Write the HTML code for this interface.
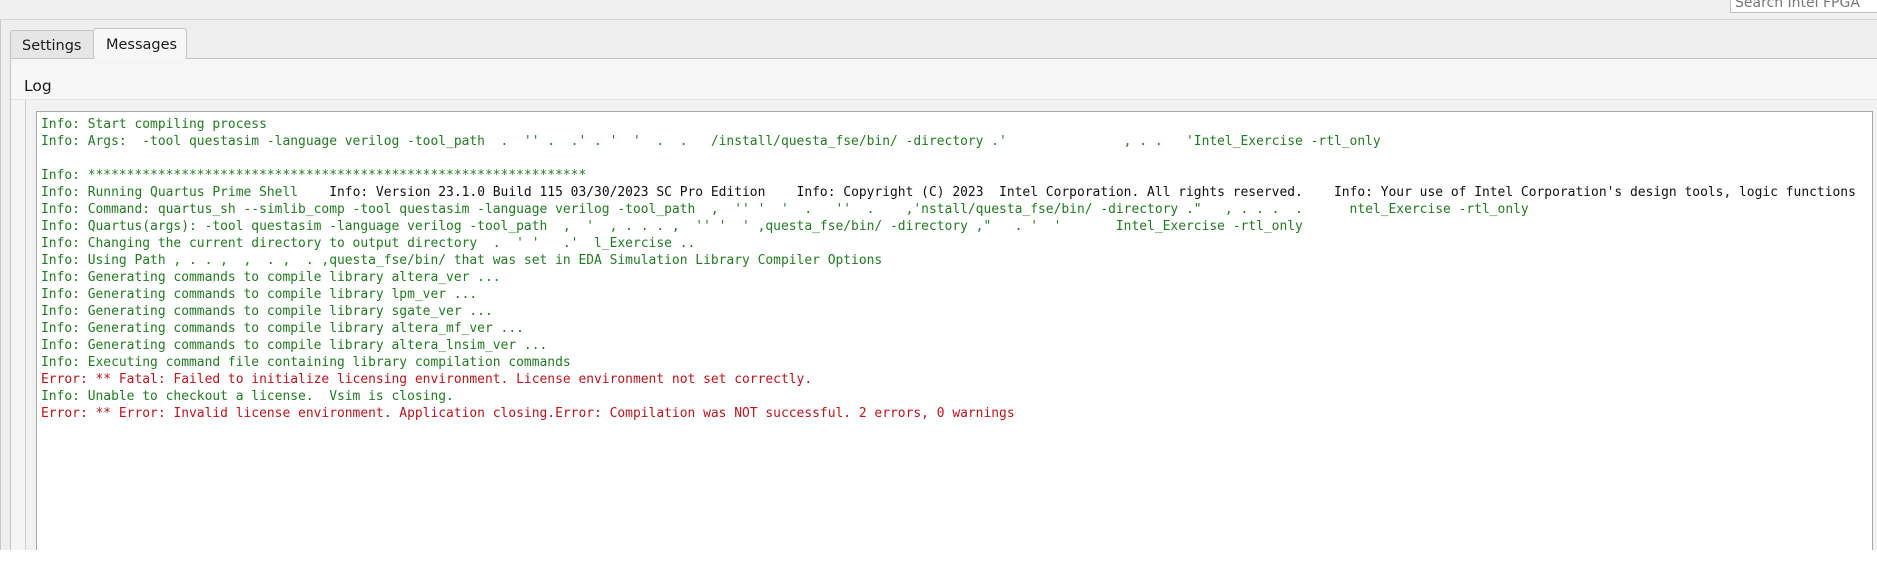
<!DOCTYPE html>
<html><head><meta charset="utf-8"><style>
*{margin:0;padding:0;box-sizing:border-box}
body{width:1877px;height:573px;background:#fff;position:relative;overflow:hidden;font-family:"DejaVu Sans","Liberation Sans",sans-serif}
.top{position:absolute;left:0;top:0;width:1877px;height:20px;background:#f0f0f0;border-bottom:1px solid #d4d4d4}
.search{position:absolute;left:1730px;top:-6px;width:160px;height:19px;background:#fff;border:1px solid #bdbdbd;font-size:14px;color:#777;padding-left:4px;line-height:16px;overflow:hidden}
.tabbar{position:absolute;left:0;top:20px;width:1877px;height:530px;background:#eeeeee;border-left:1px solid #c8c8c8}
.tab{position:absolute;font-size:14.5px;color:#1a1a1a;border:1px solid #c4c4c4;border-bottom:none;border-radius:3px 3px 0 0}
.t1{left:10px;top:30px;width:84px;height:28px;background:#e6e6e6;padding:7px 0 0 11px}
.t2{left:93px;top:28px;width:94px;height:31px;background:#f7f7f7;padding:8px 0 0 12px;z-index:2}
.panel{position:absolute;left:10px;top:58px;width:1867px;height:492px;background:#f5f5f5;border:1px solid #c4c4c4;border-right:none;border-bottom:none}
.loghdr{position:absolute;left:11px;top:65px;width:1866px;height:35px;background:#f7f7f7;border-bottom:1px solid #e2e2e2}
.loglbl{position:absolute;left:24px;top:77px;font-size:15.5px;color:#1a1a1a}
.grp{position:absolute;left:25px;top:100px;width:1852px;height:450px;background:#f2f2f2;border-left:1px solid #d0d0d0}
.box{position:absolute;left:36px;top:111px;width:1837px;height:439px;background:#fff;border:1px solid #a8a8a8;border-bottom:none}
pre{position:absolute;left:41px;top:116px;font-family:"DejaVu Sans Mono","Liberation Mono",monospace;font-size:12.95px;line-height:17px;color:#237a23;white-space:pre}
.r{color:#b8161c}.k{color:#111}
</style></head><body>
<div class="top"><div class="search">Search Intel FPGA</div></div>
<div class="tabbar"></div>
<div class="panel"></div>
<div class="tab t1">Settings</div>
<div class="tab t2">Messages</div>
<div class="loghdr"></div>
<div class="loglbl">Log</div>
<div class="grp"></div>
<div class="box"></div>
<pre>Info: Start compiling process
Info: Args:  -tool questasim -language verilog -tool_path  .  '' .  .' . '  '  .  .   /install/questa_fse/bin/ -directory .'               , . .   'Intel_Exercise -rtl_only

Info: ****************************************************************
Info: Running Quartus Prime Shell    <span class="k">Info: Version 23.1.0 Build 115 03/30/2023 SC Pro Edition    Info: Copyright (C) 2023  Intel Corporation. All rights reserved.    Info: Your use of Intel Corporation's design tools, logic functions</span>
Info: Command: quartus_sh --simlib_comp -tool questasim -language verilog -tool_path  ,  '' '  '  .   ''  .    ,'nstall/questa_fse/bin/ -directory ."   , . . .  .      ntel_Exercise -rtl_only
Info: Quartus(args): -tool questasim -language verilog -tool_path  ,  '  , . . . ,  '' '  ' ,questa_fse/bin/ -directory ,"   . '  '       Intel_Exercise -rtl_only
Info: Changing the current directory to output directory  .  ' '   .'  l_Exercise ..
Info: Using Path , . . ,  ,  . ,  . ,questa_fse/bin/ that was set in EDA Simulation Library Compiler Options
Info: Generating commands to compile library altera_ver ...
Info: Generating commands to compile library lpm_ver ...
Info: Generating commands to compile library sgate_ver ...
Info: Generating commands to compile library altera_mf_ver ...
Info: Generating commands to compile library altera_lnsim_ver ...
Info: Executing command file containing library compilation commands
<span class="r">Error: ** Fatal: Failed to initialize licensing environment. License environment not set correctly.</span>
Info: Unable to checkout a license.  Vsim is closing.
<span class="r">Error: ** Error: Invalid license environment. Application closing.Error: Compilation was NOT successful. 2 errors, 0 warnings</span></pre>
</body></html>
